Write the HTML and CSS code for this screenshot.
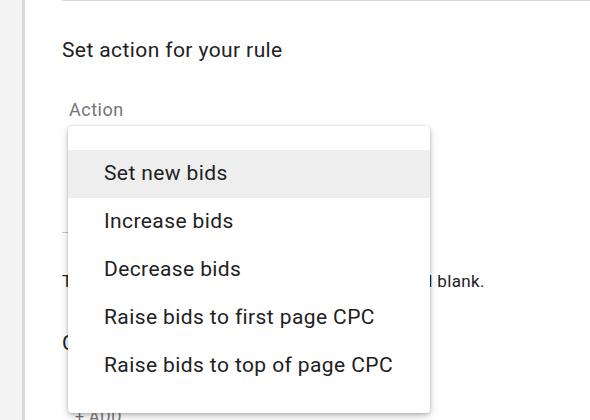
FILE: index.html
```html
<!DOCTYPE html>
<html>
<head>
<meta charset="utf-8">
<link rel="stylesheet" href="styles.css">
</head>
<body>
<div class="page">
  <div class="sidebar"></div>
  <div class="main">
    <div class="rule"></div>
    <div class="content">
      <h2 class="title">Set action for your rule</h2>
      <div class="field">
        <div class="field-label">Action</div>
        <div class="select"></div>
      </div>
      <p class="helper">To keep all your current bids, leave the bid field blank.</p>
      <h2 class="title second">Conditions</h2>
      <div class="add">+ ADD</div>
    </div>
  </div>
  <ul class="menu">
    <li class="item active">Set new bids</li>
    <li class="item">Increase bids</li>
    <li class="item">Decrease bids</li>
    <li class="item">Raise bids to first page CPC</li>
    <li class="item">Raise bids to top of page CPC</li>
  </ul>
</div>
</body>
</html>
```

FILE: styles.css
```css
html, body {
  margin: 0;
  padding: 0;
  background: #ffffff;
  font-family: Roboto, "Noto Sans", Arial, sans-serif;
  color: #212121;
}
.page {
  position: relative;
  display: flex;
  width: 590px;
  height: 420px;
  overflow: hidden;
}
.sidebar {
  width: 22px;
  flex: none;
  background: #f4f4f4;
  border-right: 3px solid #d9d9d9;
}
.main {
  flex: 1;
  padding-left: 37px;
}
.rule {
  height: 1px;
  background: #dadada;
}
.content {
  padding-top: 37px;
}
.title {
  margin: 0;
  font-size: 21px;
  line-height: 24px;
  font-weight: 400;
  letter-spacing: 0.4px;
  color: #212121;
}
.field {
  margin-top: 38px;
  width: 330px;
}
.field-label {
  font-size: 18px;
  line-height: 20px;
  letter-spacing: 0.5px;
  color: #757575;
  padding-left: 7px;
}
.select {
  height: 112px;
  border-bottom: 1px solid #c4c4c4;
}
.helper {
  margin: 38px 0 0;
  font-size: 17px;
  line-height: 20px;
  letter-spacing: 0.38px;
  white-space: nowrap;
  color: #212121;
}
.second {
  margin-top: 40px;
}
.add {
  margin-top: 52px;
  padding-left: 13px;
  font-size: 16px;
  line-height: 20px;
  color: #757575;
  letter-spacing: 0.5px;
}
.menu {
  position: absolute;
  left: 68px;
  top: 126px;
  width: 362px;
  margin: 0;
  padding: 24px 0 23px;
  list-style: none;
  background: #ffffff;
  border-radius: 4px;
  box-shadow: 0 2px 4px rgba(0,0,0,0.2), 0 4px 12px rgba(0,0,0,0.12), 0 0 2px rgba(0,0,0,0.12);
}
.item {
  height: 46px;
  line-height: 46px;
  padding: 0 0 2px 36px;
  font-size: 21px;
  letter-spacing: 0.4px;
  color: #212121;
}
.item.active {
  background: #eeeeee;
}
```
